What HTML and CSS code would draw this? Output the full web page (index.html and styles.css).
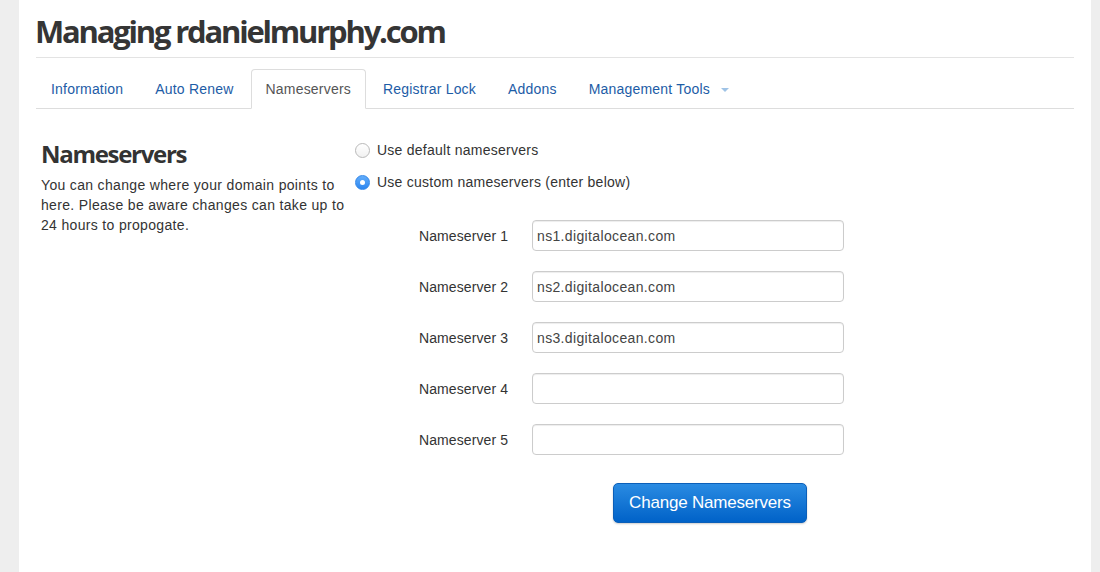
FILE: index.html
```html
<!DOCTYPE html>
<html lang="en">
<head>
<meta charset="utf-8">
<title>Managing rdanielmurphy.com</title>
<link rel="stylesheet" href="styles.css">
</head>
<body>
<div class="page">
  <h1 class="title">Managing rdanielmurphy.com</h1>
  <ul class="tabs">
    <li><a href="#">Information</a></li>
    <li><a href="#">Auto Renew</a></li>
    <li class="active"><a href="#">Nameservers</a></li>
    <li><a href="#">Registrar Lock</a></li>
    <li><a href="#">Addons</a></li>
    <li><a href="#">Management Tools <span class="caret"></span></a></li>
  </ul>
  <div class="content">
    <div class="intro">
      <h3>Nameservers</h3>
      <p>You can change where your domain points to here. Please be aware changes can take up to 24 hours to propogate.</p>
    </div>
    <form class="ns-form">
      <label class="radio"><span class="radio-dot"></span>Use default nameservers</label>
      <label class="radio checked"><span class="radio-dot"></span>Use custom nameservers (enter below)</label>
      <div class="fields">
        <label class="field-label">Nameserver 1</label><input class="field-input" type="text" value="ns1.digitalocean.com">
        <label class="field-label">Nameserver 2</label><input class="field-input" type="text" value="ns2.digitalocean.com">
        <label class="field-label">Nameserver 3</label><input class="field-input" type="text" value="ns3.digitalocean.com">
        <label class="field-label">Nameserver 4</label><input class="field-input" type="text" value="">
        <label class="field-label">Nameserver 5</label><input class="field-input" type="text" value="">
      </div>
      <button class="btn" type="button">Change Nameservers</button>
    </form>
  </div>
</div>
</body>
</html>
```
FILE: styles.css
```css
html, body {
  margin: 0;
  padding: 0;
  background: #eeeeee;
}

body {
  font-family: "Liberation Sans", Arial, sans-serif;
  font-size: 14px;
  line-height: 20px;
  color: #333;
}

.page {
  box-sizing: border-box;
  margin-left: 19px;
  width: 1072px;
  min-height: 572px;
  padding: 0 17px;
  background: #fff;
}

.title {
  margin: 0;
  padding: 11px 0 6px 0;
  text-indent: -1px;
  font-family: "Open Sans", sans-serif;
  font-weight: 700;
  font-size: 31px;
  line-height: 40px;
  letter-spacing: -2.2px;
  color: #353535;
  border-bottom: 1px solid #e3e3e3;
}

.tabs {
  display: flex;
  list-style: none;
  margin: 11px 0 0;
  padding: 0;
  border-bottom: 1px solid #ddd;
}

.tabs li {
  margin: 0 2px -1px 0;
}

.tabs a {
  display: block;
  padding: 9px 14px;
  line-height: 20px;
  letter-spacing: 0.2px;
  border: 1px solid transparent;
  border-radius: 4px 4px 0 0;
  color: #1d5ca6;
  text-decoration: none;
}

.tabs .active a {
  color: #555;
  background: #fff;
  border-color: #ddd #ddd transparent;
}

.caret {
  display: inline-block;
  width: 0;
  height: 0;
  margin-left: 7px;
  vertical-align: middle;
  border-top: 4px solid #9fc3e6;
  border-left: 4px solid transparent;
  border-right: 4px solid transparent;
}

.content {
  display: flex;
  padding-left: 5px;
}

.intro {
  width: 314px;
  flex: none;
  padding-top: 31px;
}

.intro h3 {
  margin: 0;
  font-family: "Open Sans", sans-serif;
  font-weight: 700;
  font-size: 24px;
  line-height: 28px;
  letter-spacing: -1.3px;
  color: #333;
}

.intro p {
  margin: 7px 0 0;
  width: 308px;
  letter-spacing: 0.33px;
}

.ns-form {
  padding-top: 31px;
  display: flex;
  flex-direction: column;
  align-items: flex-start;
}

.radio {
  display: flex;
  align-items: center;
  height: 20px;
  gap: 7px;
  margin-bottom: 12px;
  letter-spacing: 0.25px;
  color: #333;
}

.radio-dot {
  position: relative;
  box-sizing: border-box;
  width: 15px;
  height: 15px;
  border-radius: 50%;
  border: 1px solid #b9b9b9;
  background: linear-gradient(#ffffff, #f1f1f1);
}

.radio.checked .radio-dot {
  border-color: #3488e8;
  background: linear-gradient(#62adfb, #2c86f0);
}

.radio.checked .radio-dot::after {
  content: "";
  position: absolute;
  left: 4px;
  top: 4px;
  width: 5px;
  height: 5px;
  border-radius: 50%;
  background: #fff;
}

.fields {
  display: grid;
  grid-template-columns: 113px 312px;
  row-gap: 20px;
  align-items: center;
  margin: 16px 0 0 64px;
}

.field-label {
  color: #333;
  letter-spacing: 0.1px;
}

.field-input {
  box-sizing: border-box;
  width: 312px;
  height: 31px;
  margin: 0;
  padding: 0 4px;
  border: 1px solid #cccccc;
  border-radius: 4px;
  box-shadow: inset 0 1px 1px rgba(0, 0, 0, 0.075);
  font-family: "Liberation Sans", Arial, sans-serif;
  font-size: 14px;
  letter-spacing: 0.35px;
  color: #444;
  background: #fff;
}

.btn {
  box-sizing: border-box;
  margin: 28px 0 0 258px;
  width: 194px;
  height: 40px;
  padding: 0;
  border: 1px solid #0b5fb9;
  border-radius: 5px;
  background: linear-gradient(#2a8be2, #0062c8);
  box-shadow: 0 1px 2px rgba(0, 0, 0, 0.2);
  color: #fff;
  font-family: "Liberation Sans", Arial, sans-serif;
  font-size: 17px;
  letter-spacing: -0.2px;
  cursor: pointer;
}
```
